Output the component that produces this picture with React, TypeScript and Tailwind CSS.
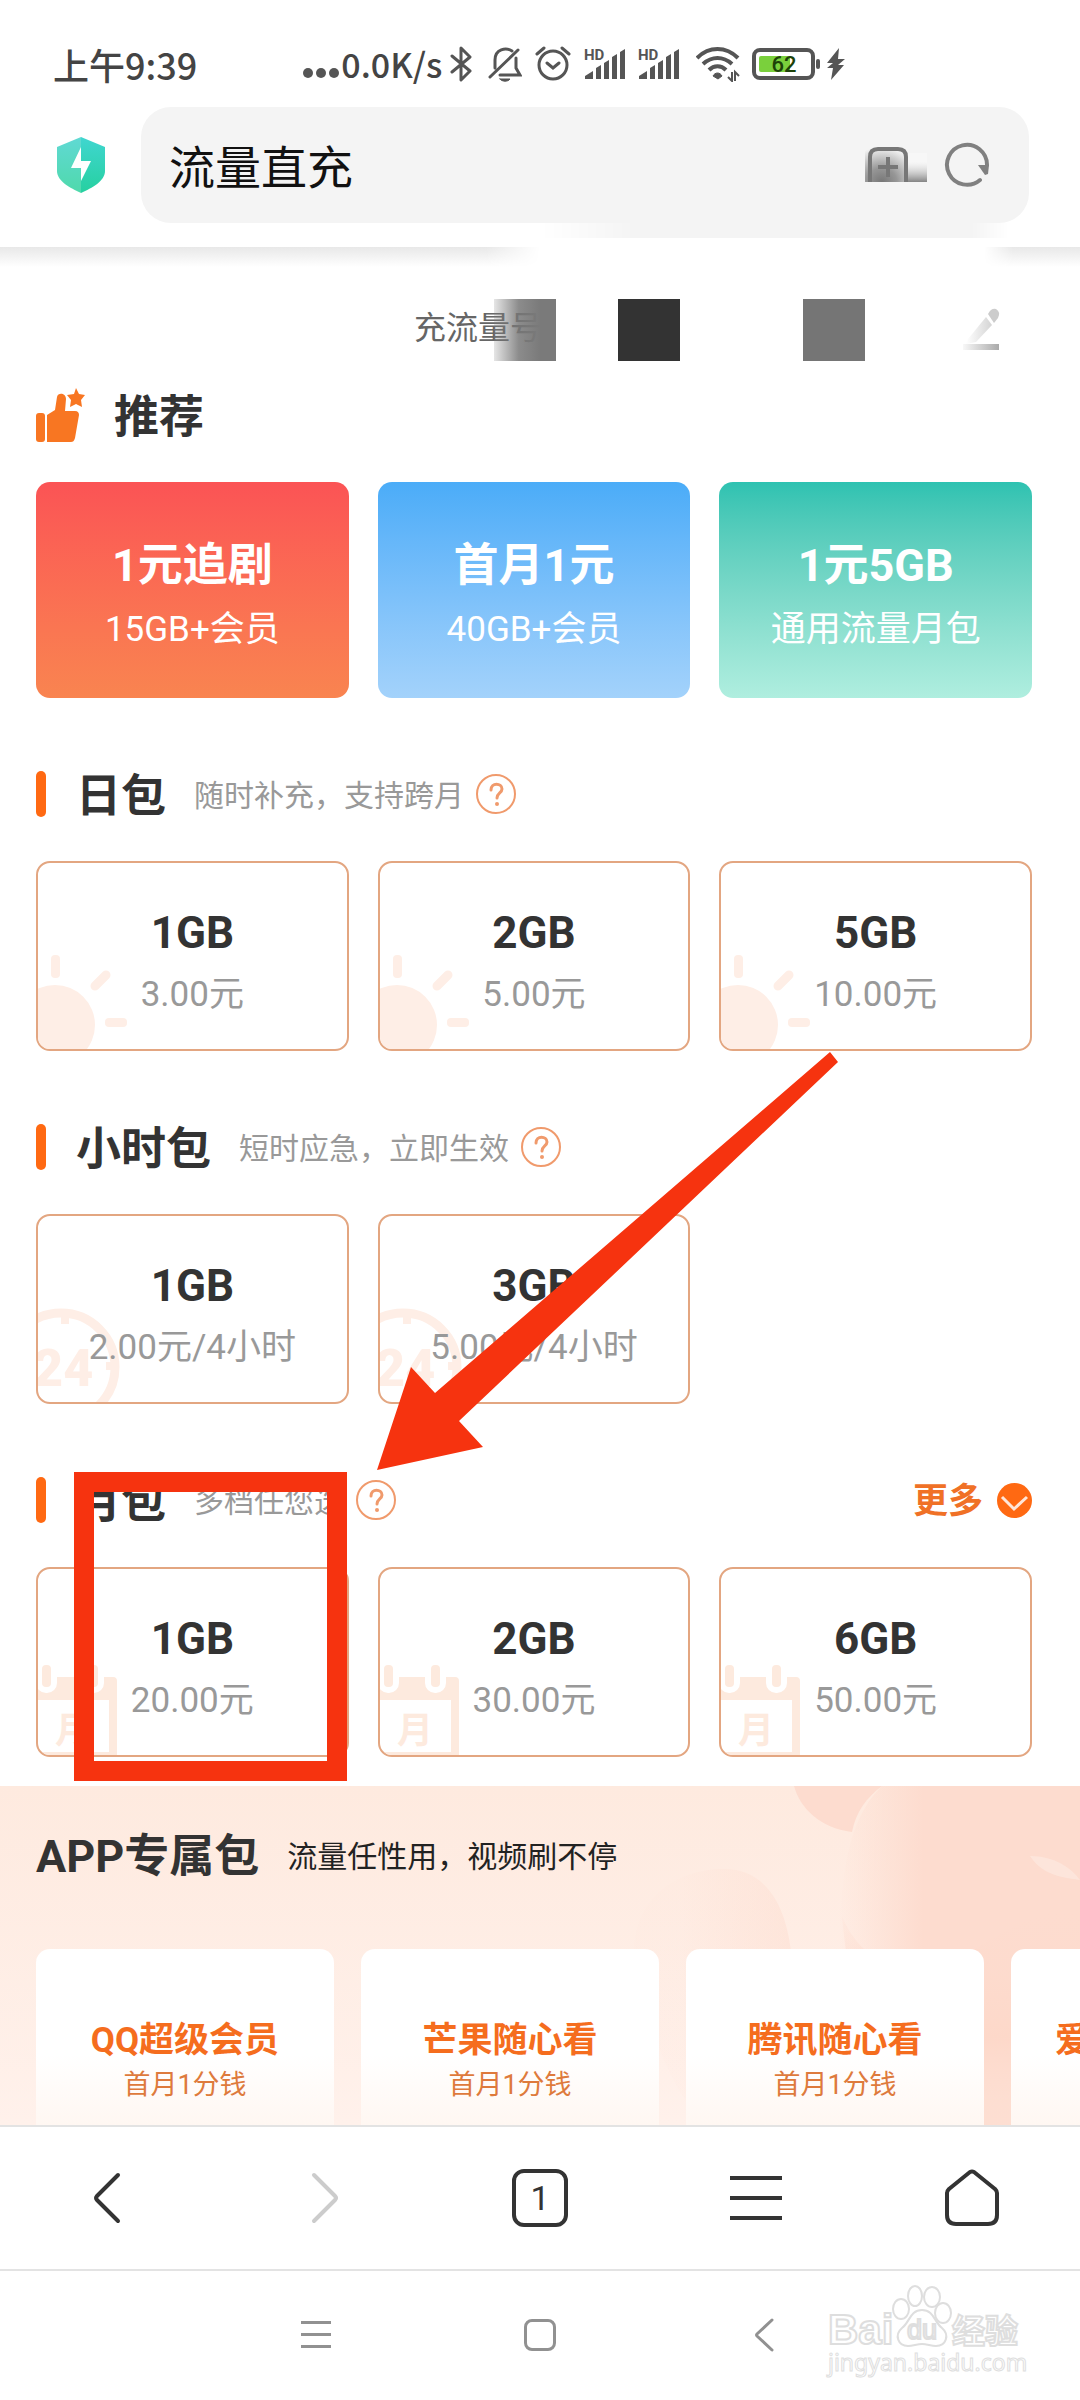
import { useState, type ReactNode } from "react";

interface Pack {
  size: string;
  price: string;
}

const recommended = [
  { title: "1元追剧", sub: "15GB+会员", bg: "bg-linear-to-b from-[#fb5355] to-[#f98450]" },
  { title: "首月1元", sub: "40GB+会员", bg: "bg-linear-to-b from-[#4aacf8] to-[#a3d2fb]" },
  { title: "1元5GB", sub: "通用流量月包", bg: "bg-linear-to-b from-[#2dc2b1] to-[#afeedf]" },
];

const dayPacks: Pack[] = [
  { size: "1GB", price: "3.00元" },
  { size: "2GB", price: "5.00元" },
  { size: "5GB", price: "10.00元" },
];

const hourPacks: Pack[] = [
  { size: "1GB", price: "2.00元/4小时" },
  { size: "3GB", price: "5.00元/4小时" },
];

const monthPacks: Pack[] = [
  { size: "1GB", price: "20.00元" },
  { size: "2GB", price: "30.00元" },
  { size: "6GB", price: "50.00元" },
];

const appPacks = ["QQ超级会员", "芒果随心看", "腾讯随心看", "爱奇艺随心看"];

function Signal() {
  return (
    <svg className="overflow-visible" width="42" height="32" viewBox="0 0 42 32" fill="#555">
      <text x="0" y="12" fontSize="15" fontWeight="700" fontFamily="Roboto, sans-serif">HD</text>
      <path d="M1 31v-3l8-5v8zM12 20l5-3v14h-5zM20 15l5-3v19h-5zM28 9l5-3v25h-5zM36 4l5-3v30h-5z" />
    </svg>
  );
}

function StatusBar() {
  return (
    <div className="flex h-[107px] items-center pt-5 pl-[53px] pr-8 font-['Noto_Sans_CJK_SC',sans-serif] text-[34px] font-medium leading-10 text-[#444]">
      <span className="text-[36px]">上午9:39</span>
      <div className="ml-[106px] flex items-center">
        <svg width="38" height="34" viewBox="0 0 38 34" fill="#555">
          <circle cx="5" cy="26" r="5" />
          <circle cx="18" cy="26" r="5" />
          <circle cx="31" cy="26" r="5" />
        </svg>
        <span>0.0K/s</span>
      </div>
      <div className="ml-2 flex items-center">
        <svg width="22" height="36" viewBox="0 0 22 36" fill="none" stroke="#555" strokeWidth="3" strokeLinecap="round" strokeLinejoin="round">
          <path d="M2 10l18 15-9 9V2l9 9L2 26" />
        </svg>
        <svg className="ml-4" width="34" height="36" viewBox="0 0 34 36" fill="none" stroke="#555" strokeWidth="3" strokeLinecap="round">
          <path d="M2 31L30 4M7 22v-8C7 3 18 1 24 5M28 12v10l4 7H12" />
          <path d="M12 33h10c-2 3-8 3-10 0z" fill="#555" strokeWidth="1" />
        </svg>
        <svg className="ml-3" width="38" height="36" viewBox="0 0 38 36" fill="none" stroke="#555" strokeWidth="3" strokeLinecap="round">
          <circle cx="19" cy="19" r="14" />
          <path d="M3 8l7-6M35 8l-7-6M13 17l6 5 6-5" />
        </svg>
        <div className="ml-3 flex gap-3">
          <Signal />
          <Signal />
        </div>
        <svg className="ml-4" width="44" height="36" viewBox="0 0 44 36" fill="none" stroke="#555" strokeWidth="4">
          <path d="M1 12c12-12 29-12 41 0M7 18c9-8 20-8 29 0M13 24c5-5 12-5 17 0" />
          <path d="M17 30c2-4 7-4 9 0l-4 3z" fill="#555" strokeWidth="1" />
          <path d="M36 26v9l-4-4M39 35v-9l4 4" strokeWidth="2" />
        </svg>
        <svg className="ml-3" width="70" height="32" viewBox="0 0 70 32">
          <rect x="2" y="2" width="59" height="28" rx="6" fill="none" stroke="#555" strokeWidth="4" />
          <rect x="7" y="8" width="31" height="16" rx="2" fill="#7ad03c" />
          <rect x="64" y="11" width="4" height="10" rx="2" fill="#555" />
          <text x="32" y="24" textAnchor="middle" fontSize="22" fontWeight="500" fill="#1d4208" fontFamily="Roboto, sans-serif">62</text>
        </svg>
        <svg className="ml-1" width="20" height="32" viewBox="0 0 20 32" fill="#555">
          <path d="M13 0L1 15h6L1 20h6L5 32l13-15h-6l7-6h-7z" />
        </svg>
      </div>
    </div>
  );
}

function BrowserHeader() {
  return (
    <header className="bg-white">
      <StatusBar />
      <div className="flex items-center pb-6 pl-14 pr-[51px]">
        <svg className="shrink-0" width="50" height="58" viewBox="0 0 50 58">
          <defs>
            <linearGradient id="shieldL" x1="0" y1="0" x2="0" y2="1">
              <stop offset="0" stopColor="#60d9d4" />
              <stop offset="1" stopColor="#4fd9ab" />
            </linearGradient>
            <linearGradient id="shieldR" x1="0" y1="0" x2="0" y2="1">
              <stop offset="0" stopColor="#40d6d0" />
              <stop offset="1" stopColor="#26d0a0" />
            </linearGradient>
          </defs>
          <path d="M25 1L1 11v24c0 10 13 17 24 22z" fill="url(#shieldL)" />
          <path d="M25 1l24 10v24c0 10-13 17-24 22z" fill="url(#shieldR)" />
          <path d="M25 11v14h10L25 45V32H15z" fill="#fff" />
        </svg>
        <form className="relative ml-[35px] flex h-[116px] flex-1 items-center rounded-[30px] bg-[#f4f4f4] pl-7 pr-9" onSubmit={(e) => e.preventDefault()}>
          <div className="absolute top-full right-5 left-[400px] h-[15px] bg-[#f4f4f4] [mask-image:linear-gradient(to_right,transparent,black_20%,black_92%,transparent)]" />
          <input aria-label="搜索" defaultValue="流量直充" className="min-w-0 flex-1 bg-transparent pt-1.5 text-[46px] leading-[60px] text-[#111] outline-none" />
          <button type="button" aria-label="添加" className="shrink-0">
            <svg width="62" height="48" viewBox="0 0 62 48" fill="none">
              <defs>
                <radialGradient id="smudge" cx="0.4" cy="1" r="0.9">
                  <stop offset="0" stopColor="#777" />
                  <stop offset="0.4" stopColor="#777" stopOpacity="0.75" />
                  <stop offset="1" stopColor="#777" stopOpacity="0" />
                </radialGradient>
                <linearGradient id="smudgeR" x1="0" y1="0" x2="0" y2="1">
                  <stop offset="0.3" stopColor="#fff" stopOpacity="0.3" />
                  <stop offset="1" stopColor="#777" stopOpacity="0.9" />
                </linearGradient>
              </defs>
              <path d="M0 2h42v39H0z" fill="url(#smudge)" />
              <path d="M42 12h20v29H42z" fill="url(#smudgeR)" />
              <path d="M5 41V16q0-8 8-8h20q8 0 8 8v25M13 26h20M23 16v20" stroke="#777" strokeWidth="4" />
            </svg>
          </button>
          <button type="button" aria-label="刷新" className="ml-4 shrink-0">
            <svg width="50" height="48" viewBox="0 0 50 48" fill="none">
              <path d="M37 39A20 20 0 1 1 44 24" stroke="#808080" strokeWidth="4" strokeLinecap="round" />
              <path d="M35 24h11l-1 9-3 1z" fill="#808080" />
            </svg>
          </button>
        </form>
      </div>
    </header>
  );
}

function NumberRow() {
  return (
    <div className="relative pt-[52px]">
      {/* header shadow, broken in the middle */}
      <div className="absolute inset-x-0 top-0 flex h-5 justify-between">
        <div className="w-1/2 bg-linear-to-b from-[#e8e8e8] to-white [mask-image:linear-gradient(to_right,black_90%,transparent)]" />
        <div className="w-24 bg-linear-to-b from-[#e8e8e8] to-white [mask-image:linear-gradient(to_right,transparent,black_30%)]" />
      </div>
      <div className="flex h-[62px] items-center justify-end pr-[78px]">
        <div className="relative flex h-full w-[142px] items-center pb-1">
          <span className="text-[32px] leading-10 text-[#666]">充流量号</span>
          <div className="absolute inset-y-0 right-0 w-[62px] bg-linear-to-r from-[#808080]/20 via-[#777]/85 via-40% to-[#7a7a7a] to-75%" />
        </div>
        <div className="ml-[62px] size-[62px] bg-[#333]" />
        <div className="ml-[123px] size-[62px] bg-[#757575]" />
        <button aria-label="编辑" className="ml-[96px]">
          <svg width="41" height="46" viewBox="0 0 41 46">
            <defs>
              <linearGradient id="pen" x1="0" y1="0" x2="1" y2="0">
                <stop offset="0" stopColor="#f8f8f8" />
                <stop offset="1" stopColor="#aaa" />
              </linearGradient>
              <linearGradient id="penBody" x1="0" y1="0" x2="1" y2="0">
                <stop offset="0" stopColor="#fff" />
                <stop offset="1" stopColor="#d4d4d4" />
              </linearGradient>
            </defs>
            <path d="M2 37h36v6H2z" fill="url(#pen)" />
            <path d="M25 10l6 8L15 35 5 37l2-5z" fill="url(#penBody)" />
            <path d="M27 7q3-6 8-5 5 3 2 9l-4 5z" fill="#ccc" />
          </svg>
        </button>
      </div>
    </div>
  );
}

function SunArt() {
  return (
    <svg className="absolute bottom-0 left-0" width="100" height="100" viewBox="0 0 100 100" fill="#feeee6">
      <circle cx="17" cy="76" r="40" />
      <rect x="13" y="6" width="9" height="23" rx="4" />
      <path d="M68 26L57 37" stroke="#feeee6" strokeWidth="9" strokeLinecap="round" />
      <rect x="67" y="69" width="22" height="9" rx="4" />
    </svg>
  );
}

function ClockArt() {
  return (
    <svg className="absolute bottom-0 left-0" width="100" height="100" viewBox="0 0 100 100" fill="#feeee6">
      <circle cx="23" cy="65" r="54" fill="none" stroke="#feeee6" strokeWidth="9" />
      <path d="M23 14h8v8h-8zM68 60h8v8h-8z" />
      <text x="-5" y="84" fontSize="52" fontWeight="900" fontFamily="Roboto, sans-serif">24</text>
    </svg>
  );
}

function CalendarArt() {
  return (
    <svg className="absolute bottom-0 left-0" width="100" height="100" viewBox="0 0 100 100" fill="#fdeade">
      <path d="M0 22h75q4 0 4 4v74H0v-3h71V45H0z" />
      <rect x="4" y="10" width="9" height="22" rx="4" stroke="#fff" strokeWidth="12" />
      <rect x="51" y="10" width="9" height="22" rx="4" stroke="#fff" strokeWidth="12" />
      <rect x="4" y="10" width="9" height="22" rx="4" />
      <rect x="51" y="10" width="9" height="22" rx="4" />
      <text x="17" y="88" fontSize="36" fontWeight="700" fontFamily="'Noto Sans CJK SC', sans-serif">月</text>
    </svg>
  );
}

function PackSection({ title, sub, packs, art, more }: { title: string; sub: string; packs: Pack[]; art: ReactNode; more?: ReactNode }) {
  return (
    <section>
      <div className="flex h-[46px] items-center">
        <div className="h-full w-[10px] rounded-full bg-[#ff6912]" />
        <h2 className="ml-[30px] pt-1.5 text-[45px] leading-[60px] font-bold text-[#333]">{title}</h2>
        <p className="ml-7 pt-1 text-[30px] leading-10 text-[#999]">{sub}</p>
        <button aria-label={`${title}说明`} className="ml-3">
          <svg width="40" height="40" viewBox="0 0 40 40" fill="none" stroke="#f09a6c" strokeWidth="2">
            <circle cx="20" cy="20" r="19" />
            <path d="M15 16c0-8 11-7 11-1 0 4-5 4-5 9" strokeWidth="3" strokeLinecap="round" />
            <circle cx="21" cy="30" r="2" fill="#f09a6c" stroke="none" />
          </svg>
        </button>
        {more}
      </div>
      <div className="mt-11 grid grid-cols-3 gap-[29px]">
        {packs.map((pack) => (
          <button key={pack.size} className="relative flex flex-col items-center overflow-hidden rounded-[14px] border-2 border-[#e3a681] bg-white pt-10 pb-[30px]">
            {art}
            <span className="relative text-[44px] leading-[60px] font-bold text-[#333]">{pack.size}</span>
            <span className="relative mt-2 text-[35px] leading-[48px] text-[#999]">{pack.price}</span>
          </button>
        ))}
      </div>
    </section>
  );
}

function AppSection() {
  return (
    <section className="relative overflow-hidden bg-linear-to-b from-[#feeadf] to-[#fff1eb] pt-[41px]">
      <svg className="absolute top-0 right-0" width="460" height="339" viewBox="0 0 460 339">
        <defs>
          <linearGradient id="petal" x1="0" y1="0" x2="1" y2="0">
            <stop offset="0" stopColor="#fddccf" stopOpacity="0" />
            <stop offset="0.35" stopColor="#fddccf" />
            <stop offset="1" stopColor="#fddccf" />
          </linearGradient>
          <linearGradient id="petalEdge" x1="0" y1="0" x2="1" y2="0">
            <stop offset="0.3" stopColor="#fddccf" stopOpacity="0.1" />
            <stop offset="1" stopColor="#fddccf" stopOpacity="0.8" />
          </linearGradient>
          <linearGradient id="petalV" x1="0" y1="0" x2="0" y2="1">
            <stop offset="0" stopColor="#fddccf" stopOpacity="0.1" />
            <stop offset="0.6" stopColor="#fdd8c9" />
            <stop offset="1" stopColor="#fde3d8" stopOpacity="0.3" />
          </linearGradient>
        </defs>
        <path d="M174 0c6 22 26 42 58 46 4-20 14-34 30-46z" fill="#fddccf" />
        <path d="M262 0h198v339H280c-50-60-70-150-58-230 4-50 16-86 40-109z" fill="url(#petal)" />
        <path d="M222 130c20 50 70 70 138 30s90-40 100-40v219H300c-50-50-70-120-78-209z" fill="url(#petalV)" />
        <path d="M14 175c-4-60 40-92 90-92 54 0 72 60 68 130s-30 126-70 126S30 250 14 175z" fill="url(#petalEdge)" opacity="0.6" />
        <path d="M410 70c14 22 40 22 50 24-4-6-20-24-50-24z" fill="#feebe3" opacity="0.6" />
      </svg>
      <div className="relative flex items-center px-9">
        <h2 className="text-[45px] leading-[60px] font-bold text-[#333]">APP专属包</h2>
        <p className="ml-7 text-[30px] leading-10 text-[#222]">流量任性用，视频刷不停</p>
      </div>
      <div className="relative mt-[62px] flex gap-[27px] overflow-hidden pl-9">
        {appPacks.map((name) => (
          <button key={name} className="flex w-[298px] shrink-0 flex-col items-center rounded-t-[14px] bg-linear-to-b from-white from-60% to-[#fff7f2] pt-[68px] pb-5">
            <span className="text-[35px] leading-[48px] font-bold whitespace-nowrap text-[#f56d1e]">{name}</span>
            <span className="text-[27px] leading-10 text-[#de7a3c]">首月1分钱</span>
          </button>
        ))}
      </div>
    </section>
  );
}

function BrowserNav() {
  return (
    <nav className="grid h-36 grid-cols-5 border-t-2 border-[#e3e3e3] bg-white">
      <button aria-label="后退" className="flex items-center justify-center">
        <svg width="32" height="52" viewBox="0 0 32 52" fill="none" stroke="#333" strokeWidth="4" strokeLinecap="round">
          <path d="M26 3L5 24q-2 2 0 4l21 21" />
        </svg>
      </button>
      <button aria-label="前进" className="flex items-center justify-center">
        <svg width="32" height="52" viewBox="0 0 32 52" fill="none" stroke="#ccc" strokeWidth="4" strokeLinecap="round">
          <path d="M6 3l21 21q2 2 0 4L6 49" />
        </svg>
      </button>
      <button aria-label="标签页" className="flex items-center justify-center">
        <span className="flex h-[58px] w-14 items-center justify-center rounded-xl border-4 border-[#333] text-[34px] leading-10 text-[#333]">1</span>
      </button>
      <button aria-label="菜单" className="flex items-center justify-center">
        <svg width="52" height="44" viewBox="0 0 52 44" fill="#333">
          <path d="M0 0h52v4H0zM0 20h52v4H0zM0 40h52v4H0z" />
        </svg>
      </button>
      <button aria-label="主页" className="flex items-center justify-center">
        <svg width="56" height="58" viewBox="0 0 56 58" fill="none" stroke="#333" strokeWidth="4" strokeLinejoin="round">
          <path d="M26 3q2-1 4 0l21 17q2 2 2 4v22q0 9-9 9H12q-9 0-9-9V24q0-2 2-4z" />
        </svg>
      </button>
    </nav>
  );
}

function SystemNav() {
  return (
    <div className="relative flex h-[130px] items-center justify-center border-t-2 border-[#e3e3e3] bg-white">
      <button aria-label="最近任务" className="flex w-56 justify-center">
        <svg width="30" height="28" viewBox="0 0 30 28" fill="#919191">
          <path d="M0 0h30v3H0zM0 12h30v3H0zM0 24h30v3H0z" />
        </svg>
      </button>
      <button aria-label="桌面" className="flex w-56 justify-center">
        <span className="size-8 rounded-lg border-3 border-[#919191]" />
      </button>
      <button aria-label="返回" className="flex w-56 justify-center">
        <svg width="20" height="34" viewBox="0 0 20 34" fill="none" stroke="#919191" strokeWidth="3" strokeLinecap="round">
          <path d="M18 2L3 16q-1 1 0 2l15 14" />
        </svg>
      </button>
      <svg className="absolute top-2 right-[50px]" width="210" height="104" viewBox="0 0 210 104" fill="#fff" stroke="#dedede" strokeWidth="2" fontFamily="'Liberation Sans', sans-serif" fontWeight="700">
        <text x="8" y="65" fontSize="42">Bai</text>
        <ellipse cx="81" cy="30" rx="8" ry="10" />
        <ellipse cx="95" cy="17" rx="7" ry="10" />
        <ellipse cx="112" cy="18" rx="8" ry="10" />
        <ellipse cx="123" cy="34" rx="8" ry="10" />
        <path d="M102 31c12 0 12 12 20 18 8 7 4 18-6 18-5 0-9-2-14-2s-9 2-14 2c-10 0-14-11-6-18 8-6 8-18 20-18z" />
        <text x="87" y="60" fontSize="27" fontWeight="400">du</text>
        <text x="132" y="64" fontSize="33" fontFamily="'Noto Sans CJK SC', sans-serif">经验</text>
        <text x="8" y="92" fontSize="23" fontWeight="400" fontFamily="'Noto Sans', sans-serif" strokeWidth="1">jingyan.baidu.com</text>
      </svg>
    </div>
  );
}

export default function App() {
  const [expanded, setExpanded] = useState(false);

  return (
    <div className="relative w-full overflow-hidden bg-white font-[Roboto,'Noto_Sans_CJK_SC',sans-serif]">
      <BrowserHeader />
      <NumberRow />

      <main>
        <div className="flex flex-col gap-[73px] pt-7 pb-[29px] pl-9 pr-12">
          <section>
            <div className="flex h-[52px] items-center">
              <svg width="50" height="54" viewBox="0 0 50 54" fill="#f87622">
                <rect x="0" y="25" width="9" height="29" rx="3" />
                <path d="M11 27l8-5 2-13c1-5 9-4 9 2l-1 12h10c3 0 4 2 4 4l-4 23c-1 3-2 4-4 4H11z" />
                <path d="M40 0l3 6 6 1-4 5 1 7-6-3-6 3 1-7-4-5 7-1z" />
              </svg>
              <h2 className="ml-7 pt-1.5 text-[45px] leading-[60px] font-bold text-[#333]">推荐</h2>
            </div>
            <div className="mt-[41px] grid grid-cols-3 gap-[29px]">
              {recommended.map((item) => (
                <button key={item.title} className={`flex flex-col items-center rounded-[14px] pt-[54px] pb-[44px] text-white ${item.bg}`}>
                  <span className="text-[45px] leading-[60px] font-bold">{item.title}</span>
                  <span className="mt-[10px] text-[35px] leading-[48px]">{item.sub}</span>
                </button>
              ))}
            </div>
          </section>

          <PackSection title="日包" sub="随时补充，支持跨月" packs={dayPacks} art={<SunArt />} />
          <PackSection title="小时包" sub="短时应急，立即生效" packs={hourPacks} art={<ClockArt />} />
          <PackSection
            title="月包"
            sub="多档任您选"
            packs={monthPacks}
            art={<CalendarArt />}
            more={
              <button onClick={() => setExpanded(!expanded)} className="ml-auto flex items-center gap-[14px] text-[35px] leading-10 font-bold text-[#f07126]">
                <span className="pt-1">更多</span>
                <svg width="35" height="35" viewBox="0 0 35 35">
                  <circle cx="17.5" cy="17.5" r="17.5" fill="#ff6912" />
                  <path d="M5 14l12 12 13-12" fill="none" stroke="#ffe6d8" strokeWidth="3" />
                </svg>
              </button>
            }
          />
        </div>
        <AppSection />
      </main>

      <BrowserNav />
      <SystemNav />

      {/* hand-drawn marks pointing at the 1GB month pack */}
      <div className="pointer-events-none absolute top-[1472px] left-[74px] h-[309px] w-[273px] border-20 border-[#f6330f]" />
      <svg className="pointer-events-none absolute top-[1050px] left-[374px]" width="468" height="424" viewBox="374 1050 468 424">
        <path d="M377 1470l34-103 24 26 395-341 8 10-379 359 24 26z" fill="#f6330f" />
      </svg>
    </div>
  );
}
